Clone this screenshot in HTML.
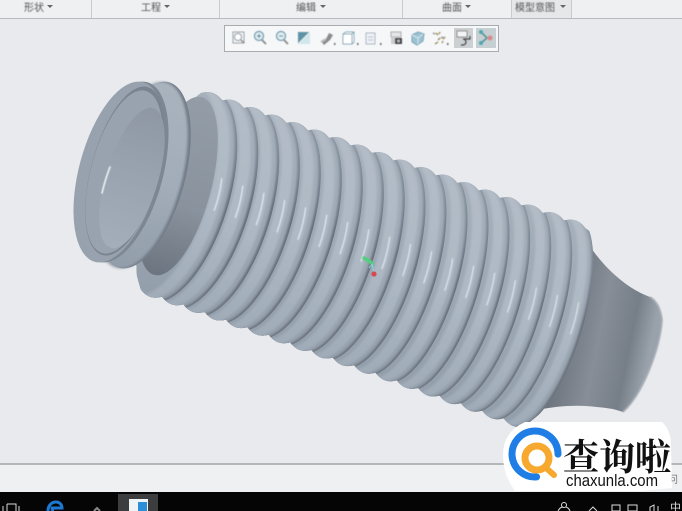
<!DOCTYPE html>
<html><head><meta charset="utf-8"><style>
html,body{margin:0;padding:0;background:#e9eaed}
#p{position:relative;width:682px;height:511px;overflow:hidden;background:#e9eaed;font-family:"Liberation Sans","Noto Sans CJK SC",sans-serif}
svg{position:absolute;left:0;top:0}
</style></head><body><div id="p">
<svg width="682" height="511" viewBox="0 0 682 511" xmlns="http://www.w3.org/2000/svg">
<defs>
<linearGradient id="cone" x1="0" y1="0" x2="1" y2="0.25">
<stop offset="0" stop-color="#5c646e"/><stop offset=".3" stop-color="#68707a"/><stop offset=".62" stop-color="#878e98"/><stop offset=".85" stop-color="#767e88"/><stop offset="1" stop-color="#99a1aa"/>
</linearGradient>
<linearGradient id="v" gradientUnits="userSpaceOnUse" x1="0" y1="-110" x2="0" y2="110">
<stop offset="0" stop-color="#b3bcc6"/><stop offset=".5" stop-color="#aeb9c5"/><stop offset="1" stop-color="#a0abb8"/>
</linearGradient>
<linearGradient id="f" x1="0" y1="0" x2="0" y2="1">
<stop offset="0" stop-color="#a9b3bd"/><stop offset=".5" stop-color="#a2adb9"/><stop offset="1" stop-color="#929daa"/>
</linearGradient>
<linearGradient id="v2" gradientUnits="userSpaceOnUse" x1="0" y1="-110" x2="0" y2="110">
<stop offset="0" stop-color="#a6b0bb"/><stop offset=".5" stop-color="#9ca7b4"/><stop offset="1" stop-color="#939eab"/>
</linearGradient>
<linearGradient id="e" gradientUnits="userSpaceOnUse" x1="0" y1="-110" x2="0" y2="110">
<stop offset="0" stop-color="#8a94a0"/><stop offset=".45" stop-color="#646c77"/><stop offset="1" stop-color="#68707b"/>
</linearGradient>
<linearGradient id="neck" x1="0" y1="0" x2="0" y2="1">
<stop offset="0" stop-color="#939ca7"/><stop offset=".6" stop-color="#89929d"/><stop offset="1" stop-color="#6c747f"/>
</linearGradient>
<linearGradient id="inner" x1="0" y1="0" x2="0" y2="1">
<stop offset="0" stop-color="#8e97a2"/><stop offset=".5" stop-color="#9aa4b0"/><stop offset="1" stop-color="#a4aeba"/>
</linearGradient>
<filter id="b1" x="-20%" y="-20%" width="140%" height="140%"><feGaussianBlur stdDeviation="1.200"/></filter>
<filter id="b2" x="-50%" y="-50%" width="200%" height="200%"><feGaussianBlur stdDeviation=".6"/></filter>
<filter id="bt"><feGaussianBlur stdDeviation=".4"/></filter>
<clipPath id="env"><path d="M201 93
q13.300 -3.750 21.350 7.500q13.300 -3.750 21.350 7.500q13.300 -3.750 21.350 7.500q13.300 -3.750 21.350 7.500q13.300 -3.750 21.350 7.500q13.300 -3.750 21.350 7.500
q13.300 -3.750 21.350 7.500q13.300 -3.750 21.350 7.500q13.300 -3.750 21.350 7.500q13.300 -3.750 21.350 7.500q13.300 -3.750 21.350 7.500q13.300 -3.750 21.350 7.500
q13.300 -3.750 21.350 7.500q13.300 -3.750 21.350 7.500q13.300 -3.750 21.350 7.500q13.300 -3.750 21.350 7.500q13.300 -3.750 21.350 7.500q13.300 -3.750 21.350 7.500
L680 300L525 426
q-13.300 3.700 -21.350 -7.600q-13.300 3.700 -21.350 -7.600q-13.300 3.700 -21.350 -7.600q-13.300 3.700 -21.350 -7.600q-13.300 3.700 -21.350 -7.600q-13.300 3.700 -21.350 -7.600
q-13.300 3.700 -21.350 -7.600q-13.300 3.700 -21.350 -7.600q-13.300 3.700 -21.350 -7.600q-13.300 3.700 -21.350 -7.600q-13.300 3.700 -21.350 -7.600q-13.300 3.700 -21.350 -7.600
q-13.300 3.700 -21.350 -7.600q-13.300 3.700 -21.350 -7.600q-13.300 3.700 -21.350 -7.600q-13.300 3.700 -21.350 -7.600q-13.300 3.700 -21.350 -7.600q-13.300 3.700 -21.350 -7.600
L137 276L130 150Z"/></clipPath>
<g id="r">
<ellipse rx="47" ry="110" fill="url(#e)"/>
<g filter="url(#b1)">
<ellipse cx="-2.500" rx="47" ry="110" fill="url(#v2)"/>
<ellipse cx="-8" rx="47" ry="110" fill="url(#v)"/>
<ellipse cx="-20" rx="47" ry="110" fill="url(#v2)"/>
</g>
<path d="M33 -28Q36 -12 35 4" fill="none" stroke="#e9f0f6" stroke-width="1.400" stroke-linecap="round" filter="url(#b2)" opacity=".85"/>
</g>
</defs>

<!-- top tab bar -->
<rect x="0" y="0" width="682" height="18" fill="#eff0f2"/>
<rect x="511" y="0" width="60" height="18" fill="#e6e7e8"/>
<rect x="0" y="18" width="682" height="1" fill="#b8bbbd"/>
<g fill="#c9cccf"><rect x="91" y="0" width="1" height="18"/><rect x="219" y="0" width="1" height="18"/><rect x="402" y="0" width="1" height="18"/><rect x="511" y="0" width="1" height="18"/><rect x="571" y="0" width="1" height="18"/></g>
<g font-size="10" fill="#555" font-family="'Liberation Sans','Noto Sans CJK SC',sans-serif" filter="url(#bt)">
<text x="24" y="11">形状</text><text x="141" y="11">工程</text><text x="296" y="11">编辑</text><text x="442" y="11">曲面</text><text x="515" y="11">模型意图</text>
</g>
<g fill="#666"><path d="M47 5h6l-3 3z"/><path d="M164 5h6l-3 3z"/><path d="M320 5h6l-3 3z"/><path d="M465 5h6l-3 3z"/><path d="M560 5h6l-3 3z"/></g>

<!-- view toolbar -->
<rect x="224.500" y="25.500" width="274" height="26" fill="#f5f7f8" stroke="#a9acae"/>
<rect x="454" y="28" width="19" height="20" fill="#ccd0d3"/>
<rect x="476" y="28" width="20" height="20" fill="#c6d0d3"/>
<g filter="url(#bt)">
<rect x="233" y="32" width="11" height="11" fill="#eef2f4" stroke="#9aa2a7"/><circle cx="238" cy="37" r="3.500" fill="#fff" stroke="#8d98a0"/><path d="M241 40l3 3" stroke="#888" stroke-width="1.500"/>
<circle cx="259" cy="36" r="4.500" fill="#dfeef3" stroke="#6b98a9" stroke-width="1.200"/><path d="M257 36h4M259 34v4" stroke="#3f7d90"/><path d="M262 40l4 4" stroke="#888" stroke-width="1.800"/>
<circle cx="281" cy="36" r="4.500" fill="#dfeef3" stroke="#6b98a9" stroke-width="1.200"/><path d="M279 36h4" stroke="#3f7d90"/><path d="M284 40l4 4" stroke="#888" stroke-width="1.800"/>
<rect x="298" y="32" width="12" height="12" fill="#5b93a6"/><path d="M298 44L310 32V44Z" fill="#cfe6ec"/><path d="M298 44L310 32" stroke="#eee"/>
<path d="M321 41l5-2 3-6 4 2-3 5-6 5z" fill="#8a8a8a"/><path d="M321 42l5-3" stroke="#bbb" stroke-width="2"/><rect x="334" y="43" width="1.500" height="2" fill="#666"/>
<path d="M343 34l3-2h8v10l-2 2h-9z" fill="#fff" stroke="#8ab" stroke-width="1"/><path d="M352 34h-9M352 34v10M352 34l2-2" stroke="#7ba3b3"/><rect x="357" y="43" width="1.500" height="2" fill="#666"/>
<path d="M366 33h9v11h-9z" fill="#eef2f5" stroke="#a9b8c1"/><path d="M368 37h5M368 40h5" stroke="#bbc"/><rect x="380" y="43" width="1.500" height="2" fill="#666"/>
<rect x="391" y="32" width="10" height="5" fill="#e4e6e8" stroke="#aaa"/><rect x="391" y="38" width="5" height="6" fill="#ccc"/><rect x="395" y="38" width="7" height="6" fill="#444"/><circle cx="398.500" cy="41" r="1.500" fill="#bbb"/>
<path d="M412 35l6-3 6 2-1 7-6 4-5-3z" fill="#9cc1d2" stroke="#74a3b8"/><path d="M412 35l6 3 5-4M418 38v6" stroke="#d6e7ef" fill="none"/>
<path d="M436 33l2 2M440 32l-1 2M445 37l-2 2M438 40l2-2M435 44l3-2M442 43l1-2" stroke="#9a7f50" stroke-width="1.300"/><path d="M433 33l2 1M441 38l2-1" stroke="#888" stroke-width="1.300"/><rect x="447" y="43" width="1.500" height="2" fill="#666"/>
<rect x="457" y="31" width="10" height="6" fill="#f3f4f5" stroke="#888"/><path d="M470 36v3h-7M463 39a3 3 0 1 1 0 6h-2" fill="none" stroke="#444" stroke-width="1.200"/>
<path d="M481 32l6 6-6 5" fill="none" stroke="#4b8f98" stroke-width="1.500"/><circle cx="481" cy="32" r="2" fill="#4fa5b0"/><circle cx="481" cy="43" r="2" fill="#4fa5b0"/><circle cx="490" cy="38" r="2.500" fill="#d98a8a"/><path d="M487 38h4" stroke="#c88"/>
</g>

<!-- part: far end -->
<path d="M591 248C608 272 630 290 650 297Q660 303 662 320C660 350 642 395 623 412Q612 408 597 407C580 405 560 405 533 411L530 330Z" fill="url(#cone)"/>
<path d="M650 297Q660 303 662 320C660 350 642 395 623 412" fill="none" stroke="#a8afb7" stroke-width="1.800" filter="url(#b2)"/>

<!-- bellows -->
<g clip-path="url(#env)">
<use href="#r" transform="translate(545 321.800) rotate(17) scale(.8 1)"/>
<use href="#r" transform="translate(523.600 314.400) rotate(17) scale(.81 1)"/>
<use href="#r" transform="translate(502.300 307) rotate(17) scale(.82 1)"/>
<use href="#r" transform="translate(480.900 299.600) rotate(17) scale(.83 1)"/>
<use href="#r" transform="translate(459.600 292.200) rotate(17) scale(.85 1)"/>
<use href="#r" transform="translate(438.200 284.800) rotate(17) scale(.86 1)"/>
<use href="#r" transform="translate(416.900 277.400) rotate(17) scale(.87 1)"/>
<use href="#r" transform="translate(395.500 270) rotate(17) scale(.88 1)"/>
<use href="#r" transform="translate(374.200 262.600) rotate(17) scale(.89 1)"/>
<use href="#r" transform="translate(352.800 255.200) rotate(17) scale(.91 1)"/>
<use href="#r" transform="translate(331.500 247.800) rotate(17) scale(.92 1)"/>
<use href="#r" transform="translate(310.100 240.400) rotate(17) scale(.93 1)"/>
<use href="#r" transform="translate(288.800 233) rotate(17) scale(.94 1)"/>
<use href="#r" transform="translate(267.400 225.600) rotate(17) scale(.95 1)"/>
<use href="#r" transform="translate(246.100 218.200) rotate(17) scale(.96 1)"/>
<use href="#r" transform="translate(224.700 210.800) rotate(17) scale(.98 1)"/>
<use href="#r" transform="translate(203.400 203.400) rotate(17) scale(.99 1)"/>
<use href="#r" transform="translate(182 196) rotate(17)"/>
</g>

<!-- triad -->
<path d="M364 258l8 5" stroke="#4fd07c" stroke-width="3.500" stroke-linecap="round" filter="url(#b2)"/>
<path d="M372 264l2 9M369 268l3-4" stroke="#7fd8d8" stroke-width="1" fill="none"/>
<circle cx="374" cy="274" r="2.600" fill="#d84a52"/>

<!-- neck -->
<ellipse cx="178" cy="186" rx="33" ry="92" transform="rotate(15 178 186)" fill="url(#neck)"/>

<!-- flange -->
<ellipse cx="144" cy="175" rx="41" ry="96" transform="rotate(15 144 175)" fill="#717b87"/>
<ellipse cx="141" cy="175" rx="41" ry="96" transform="rotate(15 141 175)" fill="url(#f)" filter="url(#b1)"/>
<path d="M163 156Q161 170 157 184" fill="none" stroke="#eef3f8" stroke-width="2" stroke-linecap="round" filter="url(#b2)"/>

<!-- front lip -->
<ellipse cx="123" cy="172" rx="40" ry="93" transform="rotate(15 123 172)" fill="#7d8793"/>
<ellipse cx="119" cy="172" rx="40" ry="93" transform="rotate(15 119 172)" fill="#97a2ae"/>
<ellipse cx="125" cy="171" rx="34" ry="87" transform="rotate(15 125 171)" fill="#7a8490"/>
<ellipse cx="124" cy="172" rx="33" ry="84" transform="rotate(15 124 172)" fill="#98a3af"/>
<!-- interior -->
<ellipse cx="132" cy="178" rx="26" ry="73" transform="rotate(17 132 178)" fill="url(#inner)"/>
<path d="M110 167Q105 180 102 193" fill="none" stroke="#eef3f8" stroke-width="1.600" stroke-linecap="round" filter="url(#b2)"/>

<!-- bottom panel -->
<rect x="0" y="464" width="682" height="28" fill="#eff0f1"/>
<rect x="0" y="463" width="682" height="2" fill="#b4b6b8"/>
<text x="668" y="483" font-size="10" fill="#777" font-family="'Liberation Sans','Noto Sans CJK SC',sans-serif">问</text>

<!-- taskbar -->
<rect x="0" y="492" width="682" height="19" fill="#050505"/>
<rect x="118" y="494" width="40" height="17" fill="#3c3d3e"/>
<rect x="129" y="499" width="19" height="12" fill="#eef3f6"/>
<rect x="138" y="502" width="9" height="9" fill="#2a8fd8"/>
<path d="M3 506v5M7 504h9v7M7 504v7M19 506v5" stroke="#d8d8d8" fill="none"/>
<path d="M48 511C48 505 52 502 56 502C60 502 62 505 62 508H52C52 510 53 511 54 511" fill="none" stroke="#1d78d0" stroke-width="3"/>
<path d="M94 511l3-3 3 3" stroke="#888" stroke-width="2" fill="none"/>
<g stroke="#ddd" fill="none"><circle cx="564" cy="505" r="2.500"/><path d="M558 511q2-4 5-4M566 507q3 1 4 4"/><path d="M589 511l4-4 4 4" stroke-width="1"/><rect x="612" y="505" width="8" height="6"/><rect x="628" y="505" width="9" height="6"/><path d="M650 511v-4l4-2v6M658 506v5"/></g>
<text x="670" y="511" font-size="11" fill="#ddd" font-family="'Noto Sans CJK SC',sans-serif">中</text>

<!-- watermark -->
<path d="M525 422H662Q671 430 671 445L672 488L640 491H515Q503 475 503 455Q503 432 525 422Z" fill="#fff"/>
<circle cx="535" cy="454" r="23" fill="none" stroke="#1f7de6" stroke-width="7" stroke-dasharray="110 34.500" transform="rotate(86 535 454)" stroke-linecap="round"/>
<circle cx="537" cy="458" r="12" fill="none" stroke="#f6a92e" stroke-width="7"/>
<path d="M545 467l9 8" stroke="#f6a92e" stroke-width="6" stroke-linecap="round"/>
<text x="563" y="470" font-size="37" font-weight="700" fill="#111" font-family="'Noto Serif CJK SC','Liberation Serif',serif" textLength="108" lengthAdjust="spacingAndGlyphs">查询啦</text>
<text x="566" y="486" font-size="17" fill="#111" font-family="'Liberation Sans',sans-serif" textLength="92" lengthAdjust="spacingAndGlyphs">chaxunla.com</text>
</svg>
</div></body></html>
